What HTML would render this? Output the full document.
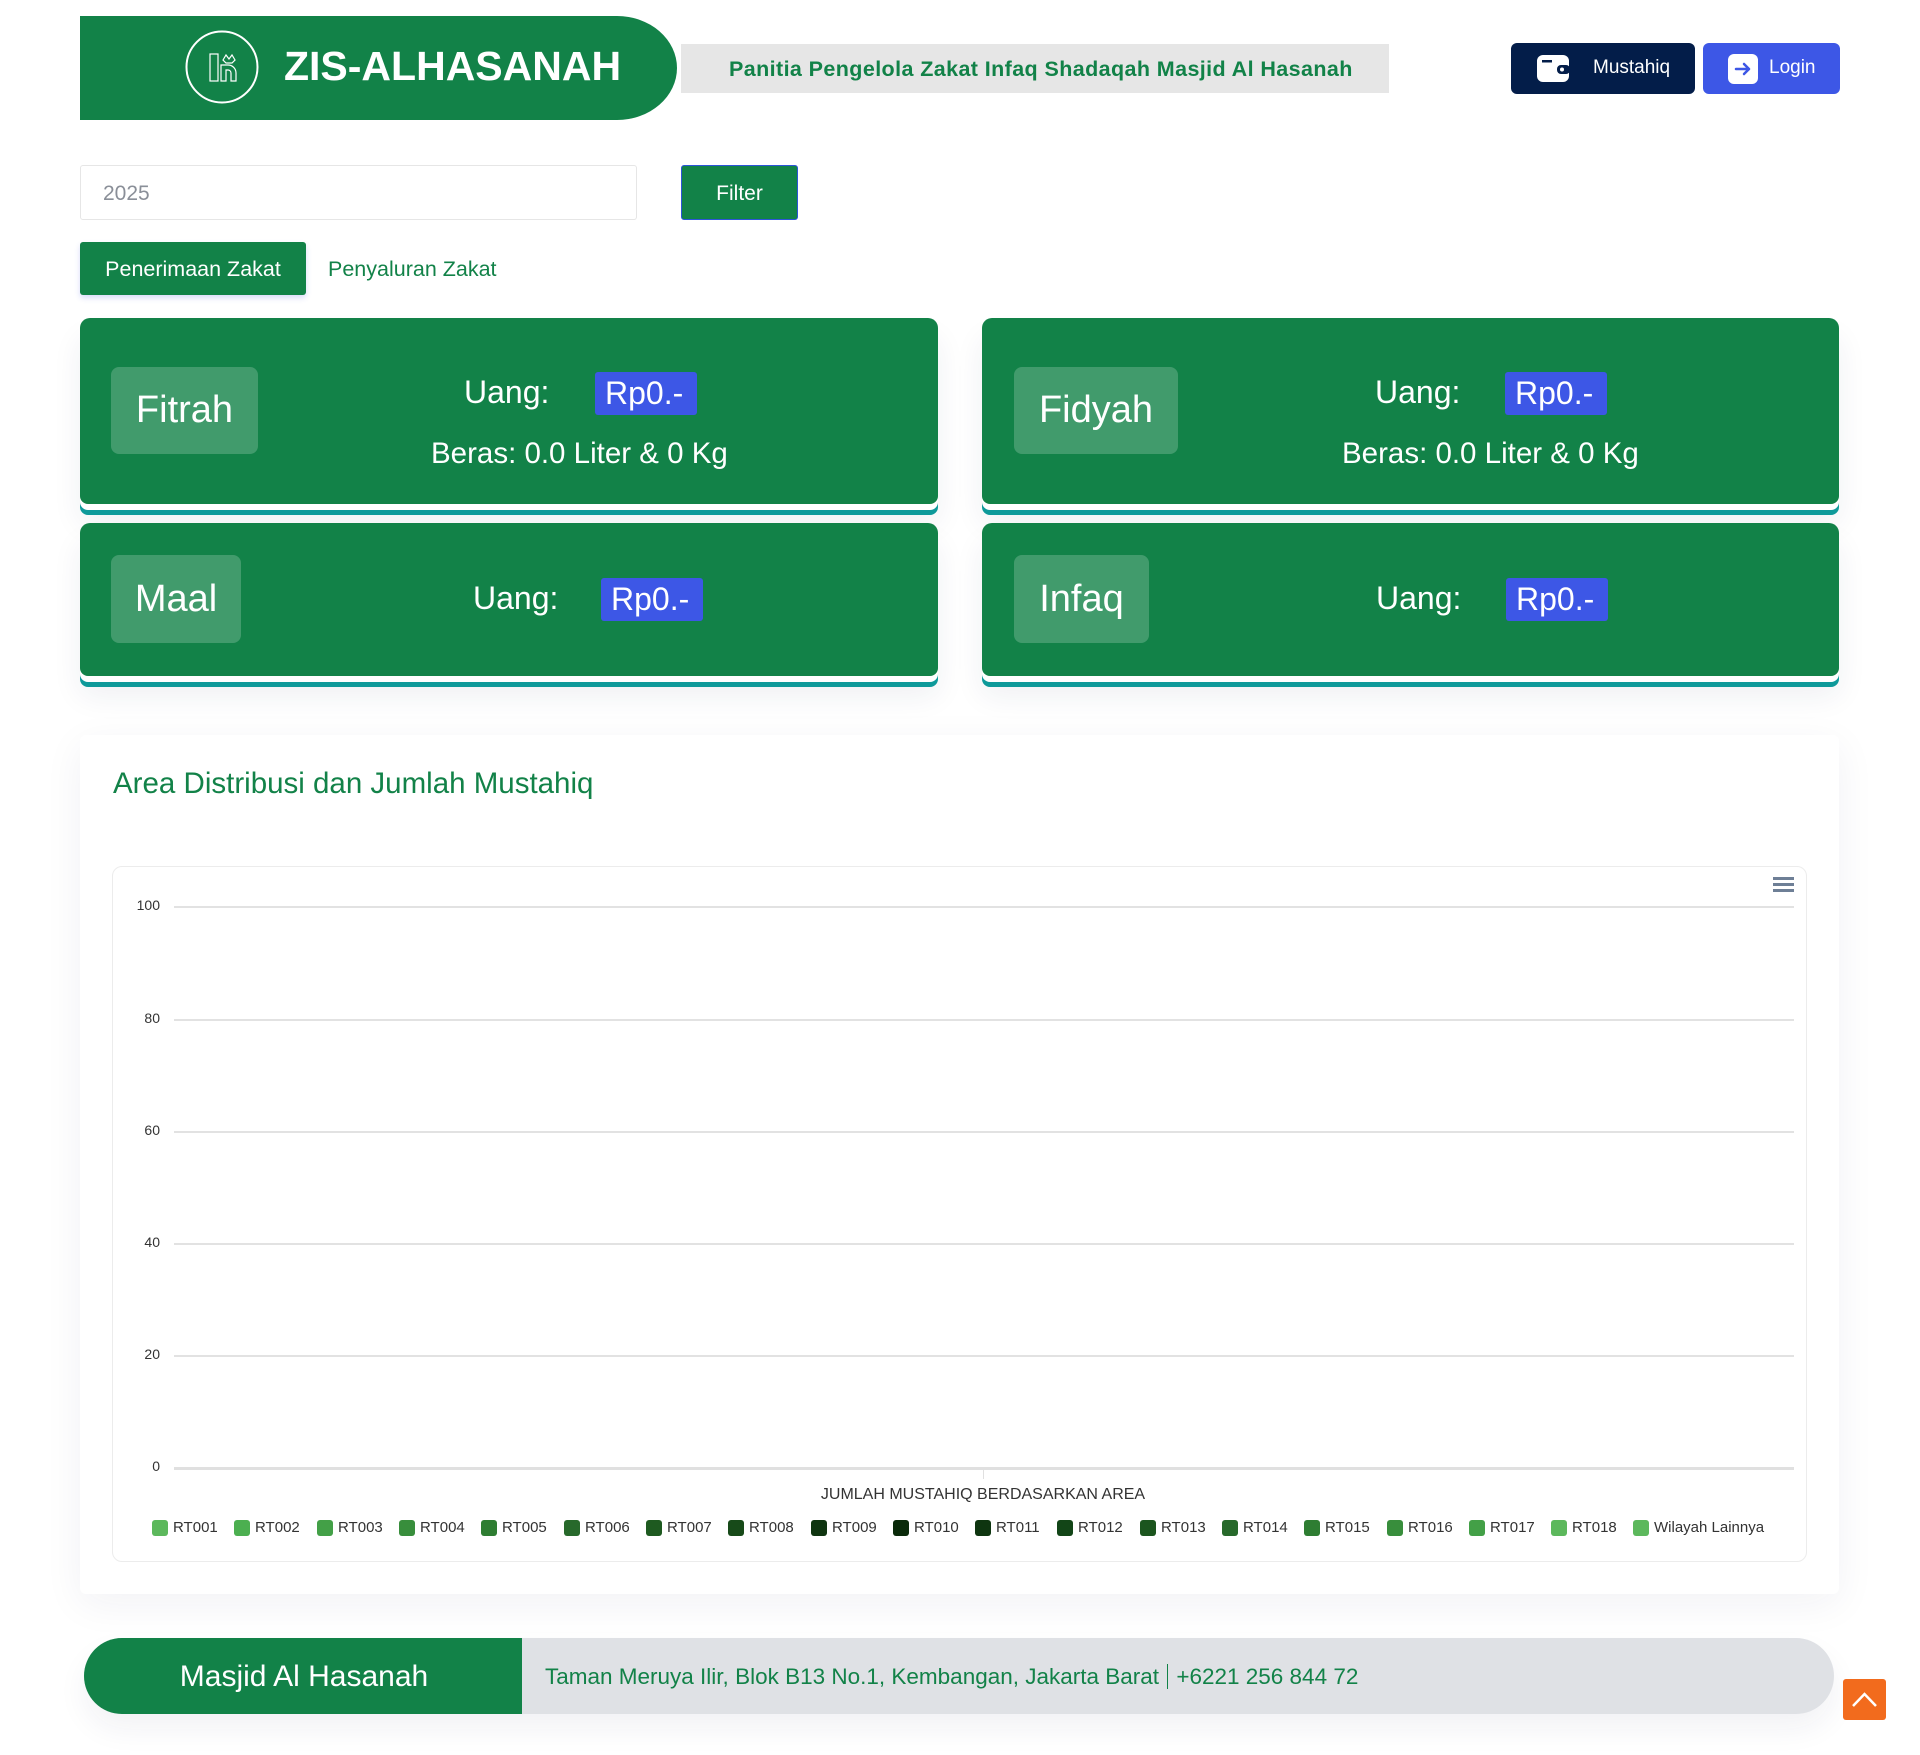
<!DOCTYPE html>
<html><head><meta charset="utf-8"><style>
*{box-sizing:border-box;margin:0;padding:0}
body{width:1920px;height:1755px;background:#fff;font-family:"Liberation Sans",sans-serif;position:relative;overflow:hidden}
.a{position:absolute}
.hdr{left:80px;top:16px;width:597px;height:104px;background:#128248;border-radius:0 60px 60px 0/0 52px 52px 0}
.title{left:284px;top:43px;color:#fff;font-weight:bold;font-size:41px;letter-spacing:0px}
.banner{left:681px;top:44px;width:708px;height:49px;background:#e6e6e6;color:#128248;font-weight:bold;font-size:21.5px;letter-spacing:0.4px;line-height:51px;padding-left:48px;white-space:nowrap}
.btn{border-radius:6px;color:#fff;font-size:19px;height:51px;top:43px}
.card{background:#128248;border-radius:10px 10px 8px 8px;box-shadow:0 6px 0 #fff,0 11px 0 #0e9a9a,0 20px 30px rgba(30,40,90,.07)}
.lbl{background:rgba(255,255,255,.2);border-radius:8px;color:#fff;font-size:38px;display:flex;align-items:center;justify-content:center}
.t{color:#fff;font-size:32px;white-space:nowrap}
.rp{background:#3d57e6;color:#fff;font-size:32px;height:43px;line-height:43px;padding:0 14px 0 10px;border-radius:3px}
.gl{left:174px;width:1620px;height:1.5px;background:#e2e2e2}
.yl{width:50px;left:110px;text-align:right;font-size:14px;color:#333}
.lg{top:1519px;font-size:15px;color:#333;white-space:nowrap;display:flex;align-items:center}
.lg i{display:inline-block;width:16px;height:16px;border-radius:3px;margin-right:5px}
</style></head><body>
<div class="a hdr"></div>
<svg class="a" style="left:184px;top:29px" width="76" height="76" viewBox="0 0 76 76">
<circle cx="38" cy="38" r="35.5" fill="none" stroke="#fff" stroke-width="2"/>
<rect x="26" y="25" width="8" height="27" fill="none" stroke="#fff" stroke-width="1.2"/>
<path d="M37 52V36h7a8 8 0 0 1 8 8v8h-5v-8a3 3 0 0 0-3-3h-2v11z" fill="none" stroke="#fff" stroke-width="1.2"/>
<path d="M39 31l3-5 3 4 3-4 3 5-3 3h-6z" fill="none" stroke="#fff" stroke-width="1.2"/>
</svg>
<div class="a title">ZIS-ALHASANAH</div>
<div class="a banner">Panitia Pengelola Zakat Infaq Shadaqah Masjid Al Hasanah</div>
<div class="a btn" style="left:1511px;width:184px;background:#031d49">
<svg class="a" style="left:26px;top:12px" width="32" height="27" viewBox="0 0 32 27"><rect x="0" y="0" width="32" height="27" rx="6" fill="#fff"/><rect x="5" y="5" width="10" height="2.5" fill="#031d49"/><rect x="20" y="10" width="13" height="9" rx="4" fill="#031d49"/><circle cx="25" cy="14.5" r="2" fill="#fff"/></svg>
<span class="a" style="left:82px;top:14px">Mustahiq</span></div>
<div class="a btn" style="left:1703px;width:137px;background:#3d57e6">
<svg class="a" style="left:25px;top:11px" width="30" height="30" viewBox="0 0 30 30"><rect width="30" height="30" rx="6" fill="#fff"/><path d="M8 15h13M16 10l5 5-5 5" stroke="#3d57e6" stroke-width="2.5" fill="none" stroke-linecap="round" stroke-linejoin="round"/></svg>
<span class="a" style="left:66px;top:14px">Login</span></div>

<div class="a" style="left:80px;top:165px;width:557px;height:55px;border:1px solid #e6e6e6;border-radius:3px;color:#8a8f98;font-size:21px;line-height:55px;padding-left:22px">2025</div>
<div class="a" style="left:681px;top:165px;width:117px;height:55px;background:#128248;border:1px solid #2c55d8;border-radius:3px;color:#fff;font-size:21px;line-height:55px;text-align:center">Filter</div>
<div class="a" style="left:80px;top:242px;width:226px;height:53px;background:#128248;border-radius:3px;color:#fff;font-size:21.5px;line-height:55px;text-align:center;box-shadow:0 3px 6px rgba(60,80,230,.2)">Penerimaan Zakat</div>
<div class="a" style="left:328px;top:242px;color:#128248;font-size:21.5px;line-height:55px">Penyaluran Zakat</div>

<div class="a card" style="left:80px;top:318px;width:858px;height:186px"></div>
<div class="a card" style="left:982px;top:318px;width:857px;height:186px"></div>
<div class="a card" style="left:80px;top:523px;width:858px;height:153px"></div>
<div class="a card" style="left:982px;top:523px;width:857px;height:153px"></div>

<div class="a lbl" style="left:111px;top:367px;width:147px;height:87px">Fitrah</div>
<div class="a t" style="left:464px;top:374px">Uang:</div>
<div class="a rp" style="left:595px;top:372px">Rp0.-</div>
<div class="a t" style="left:431px;top:437px;font-size:29.5px">Beras: 0.0 Liter &amp; 0 Kg</div>

<div class="a lbl" style="left:1014px;top:367px;width:164px;height:87px">Fidyah</div>
<div class="a t" style="left:1375px;top:374px">Uang:</div>
<div class="a rp" style="left:1505px;top:372px">Rp0.-</div>
<div class="a t" style="left:1342px;top:437px;font-size:29.5px">Beras: 0.0 Liter &amp; 0 Kg</div>

<div class="a lbl" style="left:111px;top:555px;width:130px;height:88px">Maal</div>
<div class="a t" style="left:473px;top:580px">Uang:</div>
<div class="a rp" style="left:601px;top:578px">Rp0.-</div>

<div class="a lbl" style="left:1014px;top:555px;width:135px;height:88px">Infaq</div>
<div class="a t" style="left:1376px;top:580px">Uang:</div>
<div class="a rp" style="left:1506px;top:578px">Rp0.-</div>

<div class="a" style="left:80px;top:735px;width:1759px;height:859px;background:#fff;border-radius:6px;box-shadow:0 10px 40px rgba(30,40,90,.06)"></div>
<div class="a" style="left:113px;top:767px;color:#128248;font-size:29.5px">Area Distribusi dan Jumlah Mustahiq</div>
<div class="a" style="left:112px;top:866px;width:1695px;height:696px;border:1px solid #ececec;border-radius:10px"></div>
<div class="a" style="left:1773px;top:877px;width:21px;height:3px;background:#6e7f96;box-shadow:0 6px 0 #6e7f96,0 12px 0 #6e7f96"></div>

<div class="a gl" style="top:906px"></div><div class="a yl" style="top:897px">100</div>
<div class="a gl" style="top:1019px"></div><div class="a yl" style="top:1010px">80</div>
<div class="a gl" style="top:1131px"></div><div class="a yl" style="top:1122px">60</div>
<div class="a gl" style="top:1243px"></div><div class="a yl" style="top:1234px">40</div>
<div class="a gl" style="top:1355px"></div><div class="a yl" style="top:1346px">20</div>
<div class="a gl" style="top:1467px;height:3px;background:#e0e0e0"></div><div class="a yl" style="top:1458px">0</div>
<div class="a" style="left:983px;top:1470px;width:1px;height:9px;background:#e0e0e0"></div>
<div class="a" style="left:783px;top:1486px;width:400px;text-align:center;font-size:16px;color:#333">JUMLAH MUSTAHIQ BERDASARKAN AREA</div>

<div class="a lg" style="left:152px"><i style="background:#5cb85c"></i>RT001</div>
<div class="a lg" style="left:234px"><i style="background:#4caf50"></i>RT002</div>
<div class="a lg" style="left:317px"><i style="background:#43a047"></i>RT003</div>
<div class="a lg" style="left:399px"><i style="background:#388e3c"></i>RT004</div>
<div class="a lg" style="left:481px"><i style="background:#2e7d32"></i>RT005</div>
<div class="a lg" style="left:564px"><i style="background:#27692b"></i>RT006</div>
<div class="a lg" style="left:646px"><i style="background:#1e5a20"></i>RT007</div>
<div class="a lg" style="left:728px"><i style="background:#174a19"></i>RT008</div>
<div class="a lg" style="left:811px"><i style="background:#0f3510"></i>RT009</div>
<div class="a lg" style="left:893px"><i style="background:#0a2a0a"></i>RT010</div>
<div class="a lg" style="left:975px"><i style="background:#0e3510"></i>RT011</div>
<div class="a lg" style="left:1057px"><i style="background:#124517"></i>RT012</div>
<div class="a lg" style="left:1140px"><i style="background:#1b551e"></i>RT013</div>
<div class="a lg" style="left:1222px"><i style="background:#27692b"></i>RT014</div>
<div class="a lg" style="left:1304px"><i style="background:#2e7d32"></i>RT015</div>
<div class="a lg" style="left:1387px"><i style="background:#388e3c"></i>RT016</div>
<div class="a lg" style="left:1469px"><i style="background:#43a047"></i>RT017</div>
<div class="a lg" style="left:1551px"><i style="background:#5cb85c"></i>RT018</div>
<div class="a lg" style="left:1633px"><i style="background:#5cb85c"></i>Wilayah Lainnya</div>

<div class="a" style="left:84px;top:1638px;width:1750px;height:76px;background:#dfe1e5;border-radius:38px;box-shadow:0 15px 30px rgba(30,40,90,.06)"></div>
<div class="a" style="left:84px;top:1638px;width:438px;height:76px;background:#128248;border-radius:38px 0 0 38px;color:#fff;font-size:30px;line-height:78px;text-align:center;padding-left:2px">Masjid Al Hasanah</div>
<div class="a" style="left:545px;top:1638px;line-height:78px;color:#128248;font-size:22.5px;white-space:nowrap">Taman Meruya Ilir, Blok B13 No.1, Kembangan, Jakarta Barat <span style="border-left:1.5px solid #128248;padding-left:8px;margin-left:2px">+6221 256 844 72</span></div>
<div class="a" style="left:1843px;top:1679px;width:43px;height:41px;background:#f26b1d;border-radius:3px">
<svg width="43" height="41" viewBox="0 0 43 41"><path d="M10 27l11.5-12 11.5 12" stroke="#fff" stroke-width="2.5" fill="none"/></svg></div>
</body></html>
